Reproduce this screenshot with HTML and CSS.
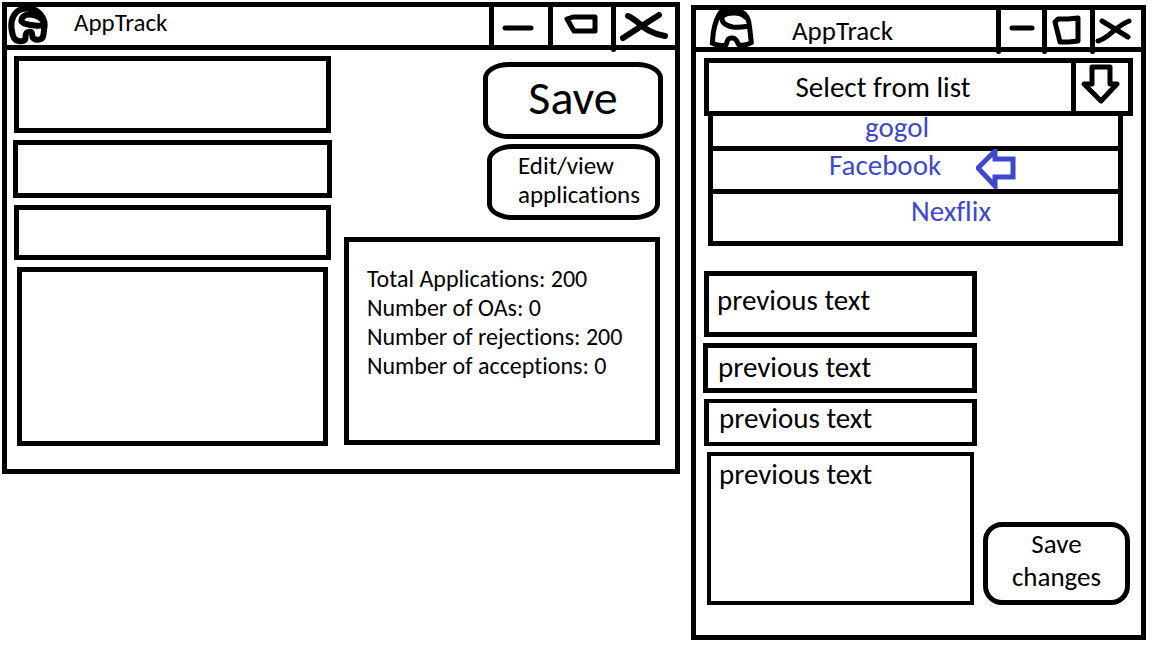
FILE: index.html
```html
<!DOCTYPE html>
<html lang="en">
<head>
<meta charset="utf-8">
<title>AppTrack</title>
<link rel="stylesheet" href="styles.css">
</head>
<body>
<main class="board">
  <section class="window window-main" aria-label="AppTrack">
    <header class="titlebar">
      <svg class="logo" viewBox="21 21 123 114" aria-hidden="true">
        <path class="ink ink-bold" d="M38 104C29 72 34 50 52 34C66 23 96 22 112 34C126 44 134 58 134 76L130 106C128 122 100 124 97 110C97 97 95 94 87 96C76 97 77 105 76 118C70 126 50 126 42 114ZM64 64C64 46 82 40 104 46C122 52 134 60 130 74C122 80 90 76 72 70Z"/>
      </svg>
      <h1 class="title">AppTrack</h1>
      <button class="control" type="button" aria-label="Minimize">
        <svg viewBox="494 7 54 38"><path class="pen" d="M505 28L531 28"/></svg>
      </button>
      <button class="control control-mid" type="button" aria-label="Maximize">
        <svg viewBox="553 7 58 38"><path class="pen" d="M567 19L573 17L595 17L595 31L574 31Z"/></svg>
      </button>
      <button class="control control-wide stub" type="button" aria-label="Close">
        <svg viewBox="616 7 59 38"><path class="pen pen-thick" d="M659 15L640 27L623 38M628 16C640 21 644 33 665 36"/></svg>
      </button>
    </header>
    <div class="main-body">
      <form class="entry">
        <input class="box box-tall" type="text" aria-label="Company">
        <input class="box box-out box-mid" type="text" aria-label="Position">
        <input class="box box-low" type="text" aria-label="Status">
        <textarea class="box box-notes" aria-label="Notes"></textarea>
      </form>
      <div class="side">
        <button class="round save" type="button">Save</button>
        <button class="round edit" type="button">Edit/view<br>applications</button>
        <div class="stats">
          <p>Total Applications: 200</p>
          <p>Number of OAs: 0</p>
          <p>Number of rejections: 200</p>
          <p>Number of acceptions: 0</p>
        </div>
      </div>
    </div>
  </section>

  <section class="window window-edit" aria-label="Edit applications">
    <header class="titlebar titlebar-edit">
      <svg class="logo logo-edit" viewBox="54 30 138 111" aria-hidden="true">
        <path class="ink" d="M67 129L70 97C74 75 80 52 92 37L108 35L154 35C170 42 178 60 179 84L184 128C174 134 160 136 148 136C142 130 140 114 128 114C112 112 112 124 108 135C94 139 80 136 67 130M98 45C91 66 104 76 128 81C145 84 160 81 174 79M98 48C112 37 150 34 166 51"/>
      </svg>
      <h2 class="title title-edit">AppTrack</h2>
      <button class="control stub" type="button" aria-label="Minimize">
        <svg viewBox="1001 10 41 37"><path class="pen" d="M1012 28L1032 28"/></svg>
      </button>
      <button class="control control-mid stub" type="button" aria-label="Maximize">
        <svg viewBox="1047 10 43 37"><path class="pen" d="M1055 22L1058 19L1068 19L1078 18L1078 41L1069 42L1060 42L1057 30Z"/></svg>
      </button>
      <button class="control control-wide stub" type="button" aria-label="Close">
        <svg viewBox="1095 10 46 37"><path class="pen" d="M1129 21C1114 27 1110 38 1098 41M1102 21L1115 29L1128 37"/></svg>
      </button>
    </header>
    <div class="edit-body">
      <div class="picker">
        <select class="select" aria-label="Application">
          <option>Select from list</option>
          <option>gogol</option>
          <option>Facebook</option>
          <option>Nexflix</option>
        </select>
        <button class="drop" type="button" aria-label="Open list">
          <svg viewBox="1076 63 52 48"><path class="pen" d="M1092 67L1110 67L1110 84L1117 84L1101 101L1084 84L1092 84Z"/></svg>
        </button>
      </div>
      <ul class="options">
        <li class="option option-first">gogol</li>
        <li class="option option-second">Facebook
          <svg class="pointer" viewBox="975 149 40 40" aria-hidden="true"><path d="M977 168L994 151L994 159L1012 159L1012 177L994 177L994 186Z"/></svg>
        </li>
        <li class="option option-third">Nexflix</li>
      </ul>
      <form class="revise">
        <div class="fields">
          <input class="box prev prev-tall" type="text" value="previous text" aria-label="Company">
          <input class="box box-out prev prev-mid" type="text" value="previous text" aria-label="Position">
          <input class="box prev prev-low" type="text" value="previous text" aria-label="Status">
          <textarea class="box prev prev-notes" aria-label="Notes">previous text</textarea>
        </div>
        <button class="round changes" type="button">Save<br>changes</button>
      </form>
    </div>
  </section>
</main>
</body>
</html>
```
FILE: styles.css
```css
* {
  box-sizing: border-box;
}

body {
  margin: 0;
  background: #fff;
  color: #000;
  font-family: Carlito, Calibri, Lato, sans-serif;
  font-size: 24px;
  line-height: 29px;
  font-variant-ligatures: none;
}

button,
input,
textarea,
select {
  margin: 0;
  padding: 0;
  border: 0;
  border-radius: 0;
  background: none;
  color: inherit;
  font: inherit;
  font-variant-ligatures: none;
}

.board {
  display: grid;
  grid-template-columns: minmax(0, 678fr) minmax(0, 455fr);
  gap: 11px;
  align-items: start;
  padding: 2px 6px 8px 2px;
}

.window {
  border: 5px solid #000;
}

.window-edit {
  margin-top: 3px;
}

/* Title bars */
.titlebar {
  display: flex;
  height: 43px;
  border-bottom: 5px solid #000;
}

.titlebar-edit {
  height: 42px;
}

.logo {
  width: 41px;
  height: 38px;
  overflow: visible;
}

.logo-edit {
  width: 46px;
  height: 37px;
  margin-left: 12px;
}

.ink {
  fill: none;
  stroke: #000;
  stroke-width: 15;
  stroke-linejoin: round;
  stroke-linecap: round;
}

.ink-bold {
  stroke-width: 18;
}

.title {
  flex: 1;
  margin: 0;
  padding: 1px 0 0 26px;
  font-size: 25px;
  font-weight: 400;
}

.title-edit {
  padding: 6px 0 0 38px;
  font-size: 27px;
}

.control {
  position: relative;
  width: 59px;
  border-left: 5px solid #000;
}

.control-mid {
  width: 63px;
}

.control-wide {
  width: 64px;
}

.titlebar-edit .control {
  width: 46px;
}

.titlebar-edit .control-mid {
  width: 48px;
}

.titlebar-edit .control-wide {
  width: 51px;
}

.control svg,
.drop svg {
  display: block;
  width: 100%;
  height: 100%;
}

.stub::after {
  content: "";
  position: absolute;
  left: -5px;
  bottom: -7px;
  width: 5px;
  height: 7px;
  border-radius: 0 0 3px 3px;
  background: #000;
}

.pen {
  fill: none;
  stroke: #000;
  stroke-width: 5;
  stroke-linejoin: round;
  stroke-linecap: round;
}

.pen-thick {
  stroke-width: 6;
}

/* Shared boxes */
.box {
  display: block;
  margin: 0 1px;
  border: 5px solid #000;
  resize: none;
}

.box-out {
  margin: 0;
}

.round {
  flex: none;
  border: 5px solid #000;
  border-radius: 26px / 16px;
}

/* Main window */
.main-body {
  display: grid;
  grid-template-columns: minmax(0, 1fr) minmax(0, 1fr);
  gap: 12px;
  padding: 6px 12px 23px 6px;
}

.entry {
  display: flex;
  flex-direction: column;
  gap: 7px;
}

.box-tall {
  height: 77px;
}

.box-mid {
  height: 58px;
}

.box-low {
  height: 55px;
}

.box-notes {
  height: 179px;
  margin: 0 4px;
}

.side {
  display: flex;
  flex-direction: column;
  align-items: flex-end;
  padding-top: 6px;
}

.save {
  width: 180px;
  height: 77px;
  padding-bottom: 6px;
  font-size: 48px;
  line-height: 48px;
}

.edit {
  width: 173px;
  height: 76px;
  margin: 5px 3px 17px 0;
  padding: 0 0 5px 26px;
  font-size: 25px;
  text-align: left;
}

.stats {
  align-self: stretch;
  min-height: 208px;
  margin-right: 3px;
  padding: 22px 18px;
  border: 5px solid #000;
}

.stats p {
  margin: 0;
}

/* Edit window */
.edit-body {
  padding: 6px 8px 30px 7px;
  font-size: 29px;
}

.picker {
  display: flex;
  height: 58px;
  margin-left: 1px;
  border: 5px solid #000;
}

.select {
  flex: 1;
  appearance: none;
  padding-right: 14px;
  text-align: center;
  text-align-last: center;
}

.drop {
  width: 57px;
  border-left: 5px solid #000;
}

.options {
  margin: 0 10px 25px 5px;
  padding: 0;
  border: 5px solid #000;
  border-top: 0;
  color: #3f48cc;
  list-style: none;
}

.option {
  display: flex;
  height: 43px;
  border-bottom: 5px solid #000;
}

.option-first {
  height: 35px;
  padding-left: 152px;
  line-height: 22px;
}

.option-second {
  padding-left: 116px;
}

.option-third {
  height: 47px;
  padding: 3px 0 0 198px;
  border-bottom: 0;
}

.pointer {
  width: 40px;
  height: 40px;
  margin: -2px 0 0 35px;
  fill: none;
  stroke: #3f48cc;
  stroke-width: 5;
}

.revise {
  display: flex;
  gap: 6px;
  align-items: flex-end;
  margin-right: 3px;
}

.fields {
  display: flex;
  flex: 1;
  flex-direction: column;
  gap: 6px;
  min-width: 0;
}

.prev {
  padding: 0 8px;
}

.fields .prev {
  min-width: 0;
  margin-right: 0;
}

.prev-tall {
  height: 66px;
  padding-bottom: 9px;
}

.prev-mid {
  height: 50px;
  padding: 0 10px 3px;
}

.prev-low {
  height: 47px;
  padding: 0 10px 10px;
  border-width: 4px 5px;
}

.fields .prev-notes {
  height: 153px;
  margin: 0 3px 0 4px;
  padding: 4px 8px;
  border-width: 4px;
}

.changes {
  width: 147px;
  height: 83px;
  padding-bottom: 7px;
  border-radius: 19px;
  font-size: 27px;
  line-height: 33px;
}
```
